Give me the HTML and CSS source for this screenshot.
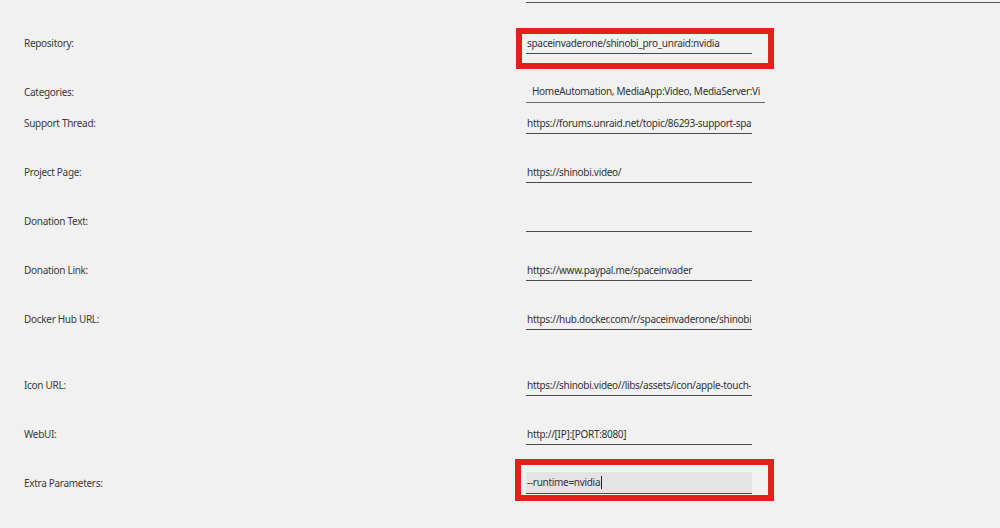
FILE: index.html
```html
<!DOCTYPE html>
<html lang="en">
<head>
<meta charset="UTF-8" />
<title>Template settings</title>
<link rel="stylesheet" href="styles.css">
</head>
<body>
<div class="prev-field"></div>

<form class="template-form">
  <div class="row">
    <label>Repository:</label>
    <div class="field">
      <input type="text" value="spaceinvaderone/shinobi_pro_unraid:nvidia" />
      <span class="highlight"></span>
    </div>
  </div>

  <div class="row compact">
    <label>Categories:</label>
    <div class="field">
      <div class="select">HomeAutomation, MediaApp:Video, MediaServer:Vi</div>
    </div>
  </div>

  <div class="row">
    <label>Support Thread:</label>
    <div class="field"><input type="text" value="https://forums.unraid.net/topic/86293-support-spaceinvaderone-shinobi-pro/" /></div>
  </div>

  <div class="row">
    <label>Project Page:</label>
    <div class="field"><input type="text" value="https://shinobi.video/" /></div>
  </div>

  <div class="row">
    <label>Donation Text:</label>
    <div class="field"><input type="text" value="" /></div>
  </div>

  <div class="row">
    <label>Donation Link:</label>
    <div class="field"><input type="text" value="https://www.paypal.me/spaceinvader" /></div>
  </div>

  <div class="row spaced">
    <label>Docker Hub URL:</label>
    <div class="field"><input type="text" value="https://hub.docker.com/r/spaceinvaderone/shinobi_pro_unraid/" /></div>
  </div>

  <div class="row">
    <label>Icon URL:</label>
    <div class="field"><input type="text" value="https://shinobi.video//libs/assets/icon/apple-touch-icon.png" /></div>
  </div>

  <div class="row">
    <label>WebUI:</label>
    <div class="field"><input type="text" value="http://[IP]:[PORT:8080]" /></div>
  </div>

  <div class="row">
    <label>Extra Parameters:</label>
    <div class="field">
      <div class="input focused">--runtime=nvidia<span class="caret"></span></div>
      <span class="highlight lower"></span>
    </div>
  </div>
</form>
</body>
</html>
```

FILE: styles.css
```css
body {
  margin: 0;
  background: #f1f1f1;
  font-family: "Noto Sans", Arial, sans-serif;
  font-size: 10px;
  letter-spacing: -0.3px;
  color: #3a3a3a;
}
.prev-field {
  margin-left: 526px;
  height: 2px;
  border-bottom: 1px solid #555;
}
.template-form {
  padding: 29px 0 0 24px;
}
.row {
  display: flex;
  align-items: flex-end;
  margin-bottom: 27px;
}
.row.compact {
  margin-bottom: 9px;
}
.row.spaced {
  margin-bottom: 44px;
}
.row label {
  width: 502px;
  flex-shrink: 0;
  line-height: 22px;
}
.field {
  position: relative;
}
.field input,
.field .input {
  display: block;
  box-sizing: border-box;
  width: 226px;
  height: 22px;
  margin: 0;
  padding: 0 1px;
  border: 0;
  border-bottom: 1px solid #4a4a4a;
  background: transparent;
  font: inherit;
  letter-spacing: inherit;
  color: #333;
  outline: none;
}
.field .input {
  line-height: 21px;
  white-space: nowrap;
  overflow: hidden;
}
.field .input.focused {
  background: #e4e4e4;
}
.caret {
  display: inline-block;
  width: 1px;
  height: 13px;
  background: #222;
  vertical-align: middle;
  margin-top: -2px;
  margin-left: 1px;
}
.select {
  box-sizing: border-box;
  width: 239px;
  height: 22px;
  line-height: 21px;
  padding: 0 6px;
  border-bottom: 1px solid #6a6a6a;
  white-space: nowrap;
  color: #333;
}

/* Annotation boxes drawn over the fields */
.highlight {
  position: absolute;
  left: -10px;
  top: -4px;
  width: 258px;
  height: 41px;
  box-sizing: border-box;
  border: 6px solid #e3201b;
  pointer-events: none;
}
.highlight.lower {
  left: -11px;
  top: -13px;
  width: 259px;
  height: 42px;
}
```
